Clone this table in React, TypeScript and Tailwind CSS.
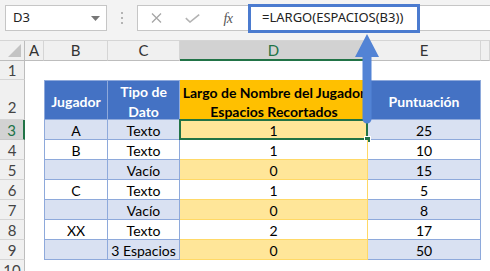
import React from 'react';

type DataRow = {
  n: number;
  jugador: string;
  tipo: string;
  largo: string;
  pts: string;
};

const dataRows: DataRow[] = [
  { n: 3, jugador: 'A', tipo: 'Texto', largo: '1', pts: '25' },
  { n: 4, jugador: 'B', tipo: 'Texto', largo: '1', pts: '10' },
  { n: 5, jugador: '', tipo: 'Vacío', largo: '0', pts: '15' },
  { n: 6, jugador: 'C', tipo: 'Texto', largo: '1', pts: '5' },
  { n: 7, jugador: '', tipo: 'Vacío', largo: '0', pts: '8' },
  { n: 8, jugador: 'XX', tipo: 'Texto', largo: '2', pts: '17' },
  { n: 9, jugador: '', tipo: '3 Espacios', largo: '0', pts: '50' },
];

// --- Formula bar ---
function FormulaBar() {
  return (
    <div className="flex h-[41px] bg-[#f3f3f3] pt-[5px] pl-[5px] border-b border-[#d5d5d5]">
      {/* Name box */}
      <div className="w-[102px] h-[26px] bg-white border border-[#c6c6c6] flex items-center justify-between pl-[7px] pr-[6px]">
        <span className="text-[13px] text-[#222] font-['Noto_Sans',sans-serif]">D3</span>
        <svg width="9" height="5" viewBox="0 0 9 5">
          <polygon points="0,0 9,0 4.5,5" fill="#777" />
        </svg>
      </div>

      {/* Grip dots */}
      <div className="w-[30px] h-[26px] flex flex-col items-center justify-center gap-[3px]">
        <div className="w-[2px] h-[2px] bg-[#b4b4b4]" />
        <div className="w-[2px] h-[2px] bg-[#b4b4b4]" />
        <div className="w-[2px] h-[2px] bg-[#b4b4b4]" />
      </div>

      {/* Formula input */}
      <div className="flex-1 h-[26px] bg-white border border-r-0 border-[#c6c6c6] flex items-center">
        <div className="w-[36px] flex justify-center">
          <svg width="11" height="10" viewBox="0 0 11 10">
            <path d="M1 0.5 L10 9.5 M10 0.5 L1 9.5" stroke="#a6a6a6" strokeWidth="1.3" />
          </svg>
        </div>
        <div className="w-[36px] flex justify-center">
          <svg width="15" height="9" viewBox="0 0 15 9">
            <path d="M0.8 4.2 L5 8 L14.2 0.6" stroke="#b3b3b3" strokeWidth="1.6" fill="none" />
          </svg>
        </div>
        <div className="w-[36px] flex justify-center">
          <span className="italic text-[14px] text-[#555] font-['Liberation_Serif',serif] tracking-[-0.5px]">fx</span>
        </div>
        <span className="pl-[16px] text-[13px] text-[#222] font-['Noto_Sans',sans-serif] whitespace-nowrap">
          =LARGO(ESPACIOS(B3))
        </span>
      </div>
    </div>
  );
}

// --- Sheet headers ---
const colHeadBase =
  'flex items-center justify-center bg-[#f0f0f0] border-r border-b border-r-[#d5d5d5] border-b-[#bdbdbd] text-[#333] text-[15px]';
const colHeadActive =
  'flex items-center justify-center bg-[#d2d2d2] border-r border-b-2 border-r-[#c6c6c6] border-b-[#217346] text-[#217346] text-[15px]';

const rowHeadBase =
  'flex items-center justify-center bg-[#f0f0f0] border-r border-b border-r-[#bdbdbd] border-b-[#d5d5d5] text-[#444] text-[15px] pt-[1px]';
const rowHeadActive =
  'flex items-center justify-center bg-[#d2d2d2] border-r-2 border-b border-r-[#217346] border-b-[#c6c6c6] text-[#217346] text-[15px] pt-[1px]';

// --- Table cells ---
const headBlue =
  'flex items-center justify-center text-center bg-[#4472c4] text-white font-bold text-[14px] leading-[20px] border-t border-r border-b border-[#8ea9db] pt-[3px]';
const headGold =
  'flex items-center justify-center text-center bg-[#ffc000] text-black font-bold text-[14px] leading-[19px] border-t border-b border-[#ffc000] pt-[3px] whitespace-nowrap';

function blueCell(odd: boolean, first?: boolean) {
  if (first) {
    return odd
      ? 'flex items-center justify-center bg-[#d9e1f2] border-l border-r border-b border-[#8ea9db] text-[14px] text-black pt-[2px]'
      : 'flex items-center justify-center bg-white border-l border-r border-b border-[#8ea9db] text-[14px] text-black pt-[2px]';
  }
  return odd
    ? 'flex items-center justify-center bg-[#d9e1f2] border-r border-b border-[#8ea9db] text-[14px] text-black pt-[2px]'
    : 'flex items-center justify-center bg-white border-r border-b border-[#8ea9db] text-[14px] text-black pt-[2px]';
}

function goldCell(odd: boolean) {
  return odd
    ? 'relative flex items-center justify-center bg-[#ffe699] border-r border-b border-[#ffd966] text-[14px] text-black pt-[2px]'
    : 'relative flex items-center justify-center bg-white border-r border-b border-[#ffd966] text-[14px] text-black pt-[2px]';
}

function Sheet() {
  return (
    <div className="grid grid-cols-[25px_19px_64px_72px_188px_113px_9px] grid-rows-[20px_19px_40px_repeat(8,20px)] font-['Lato',sans-serif]">
      {/* column letters */}
      <div className="relative bg-[#f0f0f0] border-r border-b border-r-[#bdbdbd] border-b-[#bdbdbd]">
        <svg className="absolute right-[3px] bottom-[3px]" width="13" height="13" viewBox="0 0 13 13">
          <polygon points="13,0 13,13 0,13" fill="#c3c3c3" />
        </svg>
      </div>
      <div className={colHeadBase}>A</div>
      <div className={colHeadBase}>B</div>
      <div className={colHeadBase}>C</div>
      <div className={colHeadActive}>D</div>
      <div className={colHeadBase}>E</div>
      <div className={colHeadBase} />

      {/* row 1 */}
      <div className={rowHeadBase}>1</div>
      <div />
      <div />
      <div />
      <div />
      <div />
      <div />

      {/* row 2: table header */}
      <div className="flex items-end justify-center bg-[#f0f0f0] border-r border-b border-r-[#bdbdbd] border-b-[#d5d5d5] text-[#444] text-[15px] pb-[1px]">
        2
      </div>
      <div />
      <div className={`${headBlue} border-l`}>Jugador</div>
      <div className={headBlue}>
        Tipo de
        <br />
        Dato
      </div>
      <div className={headGold}>
        Largo de Nombre del Jugador
        <br />
        Espacios Recortados
      </div>
      <div className={headBlue}>Puntuación</div>
      <div />

      {/* data rows */}
      {dataRows.map((row, i) => {
        const odd = i % 2 === 0;
        const selected = row.n === 3;
        return (
          <React.Fragment key={row.n}>
            <div className={selected ? rowHeadActive : rowHeadBase}>{row.n}</div>
            <div />
            <div className={blueCell(odd, true)}>{row.jugador}</div>
            <div className={blueCell(odd)}>{row.tipo}</div>
            <div className={goldCell(odd)}>
              {row.largo}
              {selected && (
                <>
                  <div className="absolute -left-[1px] -top-[1px] -right-[1px] -bottom-[1px] border-2 border-[#217346]" />
                  <div className="absolute -right-[4px] -bottom-[4px] w-[7px] h-[7px] bg-[#217346] border border-white" />
                </>
              )}
            </div>
            <div className={blueCell(odd)}>{row.pts}</div>
            <div />
          </React.Fragment>
        );
      })}

      {/* row 10 */}
      <div className={rowHeadBase}>10</div>
    </div>
  );
}

export default function App() {
  return (
    <div className="relative w-[490px] h-[271px] overflow-hidden bg-white">
      <FormulaBar />
      <Sheet />

      {/* callout around the formula */}
      <div className="absolute left-[248px] top-[4px] w-[172px] h-[29px] border-[3px] border-[#4b7bcf]" />

      {/* callout arrow pointing up at the formula */}
      <svg className="absolute left-[354px] top-[33px]" width="27" height="92" viewBox="0 0 27 92">
        <path
          d="M13 1 L25 24 L17.5 24 L17.5 86 A4.5 4.5 0 0 1 8.5 86 L8.5 24 L1 24 Z"
          fill="#5283d5"
        />
      </svg>
    </div>
  );
}
